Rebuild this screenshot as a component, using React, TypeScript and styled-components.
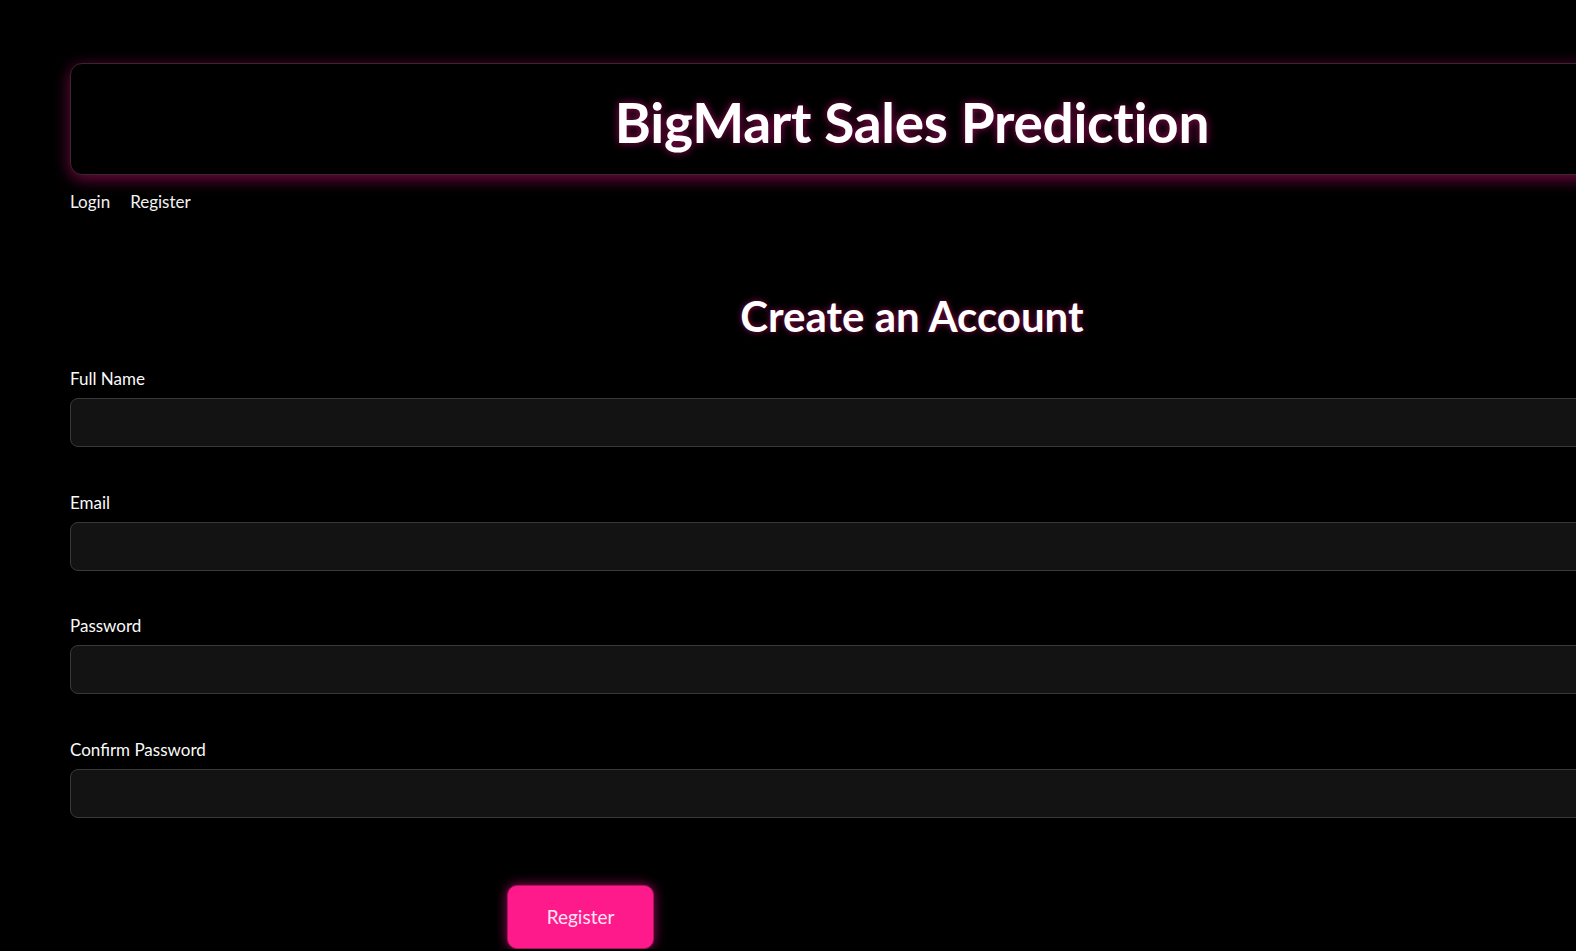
import React from "react";
import styled, { createGlobalStyle } from "styled-components";

const Global = createGlobalStyle`
  html, body {
    margin: 0;
    padding: 0;
    background: #000;
    overflow: hidden;
  }
  body {
    font-family: Lato, "Noto Sans", sans-serif;
    color: #fafafa;
  }
`;

const Page = styled.div`
  width: 1684px;
  padding: 63px 0 0 70px;
  display: flex;
  flex-direction: column;
`;

const Header = styled.header`
  height: 112px;
  box-sizing: border-box;
  padding-top: 5px;
  border: 1px solid #3b2532;
  border-radius: 12px;
  background: #000;
  box-shadow: 0 4px 16px rgba(255, 20, 147, 0.45);
  display: flex;
  align-items: center;
  justify-content: center;
`;

const Title = styled.h1`
  margin: 0;
  font-size: 55px;
  font-weight: 700;
  color: #fff;
  letter-spacing: -0.3px;
  text-shadow: 0 0 8px rgba(255, 20, 147, 0.6);
`;

const Nav = styled.nav`
  display: flex;
  gap: 20px;
  margin-top: 16px;
`;

const NavLink = styled.a`
  font-size: 17px;
  color: #f2f2f2;
  text-decoration: none;
  line-height: 22px;
`;

const Heading = styled.h2`
  margin: 77px 0 0;
  text-align: center;
  font-size: 42px;
  font-weight: 700;
  color: #fff;
  line-height: 52px;
  text-shadow: 0 0 6px rgba(255, 20, 147, 0.55);
`;

const Form = styled.form`
  display: flex;
  flex-direction: column;
  gap: 44.6px;
  margin-top: 26px;
`;

const Field = styled.div`
  display: flex;
  flex-direction: column;
  gap: 8px;
`;

const Label = styled.label`
  font-size: 17px;
  line-height: 22px;
  color: #fafafa;
`;

const Input = styled.input`
  height: 49px;
  box-sizing: border-box;
  background: #131313;
  border: 1px solid #393939;
  border-radius: 8px;
  color: #fff;
  font-size: 16px;
  padding: 0 14px;
  outline: none;
`;

const Button = styled.button`
  margin: 67px 0 0 437px;
  width: 147px;
  height: 64px;
  border: 1px solid #b0105f;
  border-radius: 10px;
  background: #ff1a8c;
  color: #fde6f1;
  font-family: Lato, "Noto Sans", sans-serif;
  font-size: 19px;
  box-shadow: 0 0 12px rgba(255, 20, 147, 0.6);
  cursor: pointer;
`;

const fields = [
  { label: "Full Name", type: "text" },
  { label: "Email", type: "email" },
  { label: "Password", type: "password" },
  { label: "Confirm Password", type: "password" },
];

export default function App() {
  return (
    <>
      <Global />
      <Page>
        <Header>
          <Title>BigMart Sales Prediction</Title>
        </Header>
        <Nav>
          <NavLink>Login</NavLink>
          <NavLink>Register</NavLink>
        </Nav>
        <Heading>Create an Account</Heading>
        <Form onSubmit={(e) => e.preventDefault()}>
          {fields.map((f) => (
            <Field key={f.label}>
              <Label>{f.label}</Label>
              <Input type={f.type} />
            </Field>
          ))}
        </Form>
        <Button type="button">Register</Button>
      </Page>
    </>
  );
}
